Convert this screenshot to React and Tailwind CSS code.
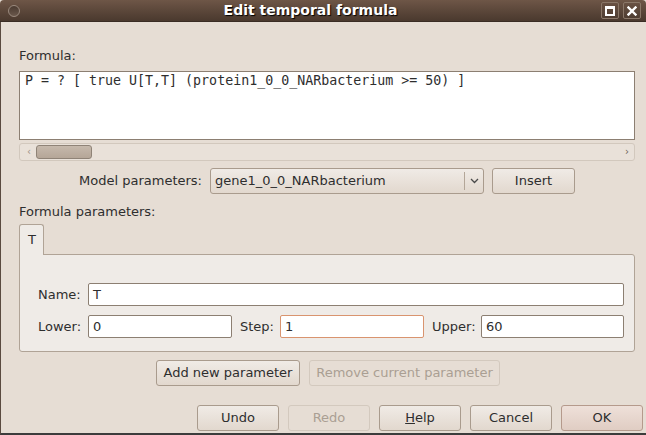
import React from 'react';

const font = { fontFamily: '"DejaVu Sans", Verdana, sans-serif' };

function Button({ children, disabled, primary, className = '' }) {
  return (
    <div
      className={`flex items-center justify-center h-[26px] rounded-[3px] border text-[13px] ${
        disabled
          ? 'border-[#d3c9be] text-[#aa9f93] bg-[#e6ddd4]'
          : primary
          ? 'border-[#b59a8c] text-[#2e2e2e] bg-gradient-to-b from-[#eee0d9] to-[#e0cdc3]'
          : 'border-[#a99b8d] text-[#2e2e2e] bg-gradient-to-b from-[#f0ebe6] to-[#e2d8ce]'
      } ${className}`}
    >
      {children}
    </div>
  );
}

function Field({ value, focused, className = '' }) {
  return (
    <div
      className={`h-[23px] bg-white rounded-[2px] border flex items-center px-[4px] text-[13px] text-[#2e2e2e] ${
        focused ? 'border-[#d9946f]' : 'border-[#8c7f72]'
      } ${className}`}
    >
      {value}
    </div>
  );
}

export default function App() {
  return (
    <div className="w-[646px] h-[435px] bg-[#e6ddd4] flex flex-col text-[#2e2e2e] overflow-hidden" style={font}>
      {/* title bar */}
      <div className="h-[22px] shrink-0 flex items-center pl-[8px] pr-[5px] bg-gradient-to-b from-[#6e5647] to-[#4a392e] border-b border-[#3a2c24] rounded-t-[4px]">
        <div className="w-[12px] h-[12px] rounded-full border border-[#9a8a7e] bg-gradient-to-b from-[#4a3a30] to-[#6a584c]" />
        <div className="flex-1 text-center text-white font-bold text-[14px] [text-shadow:1px_1px_1px_#000]">
          Edit temporal formula
        </div>
        <div className="flex gap-[4px]">
          <div className="w-[18px] h-[17px] border border-[#8a7768] rounded-[2px] flex items-center justify-center">
            <div className="w-[10px] h-[10px] border-[2px] border-white border-t-[3px]" />
          </div>
          <div className="w-[18px] h-[17px] border border-[#8a7768] rounded-[2px] flex items-center justify-center">
            <svg width="10" height="10" viewBox="0 0 10 10">
              <path d="M1.5 1.5L8.5 8.5M8.5 1.5L1.5 8.5" stroke="#fff" strokeWidth="2.4" strokeLinecap="square" />
            </svg>
          </div>
        </div>
      </div>

      <div className="flex-1 flex flex-col pl-[18px] pr-[11px] border-l border-[#5a4a40] border-b-[2px] border-b-[#3c3c3c]">
        <div className="mt-[26px] text-[13px] leading-[16px]">Formula:</div>

        <div className="mt-[7px] h-[69px] bg-white border border-[#8c7f72] px-[5px] pt-[1px] text-[13.3px] leading-[16px]" style={{ fontFamily: '"DejaVu Sans Mono", monospace' }}>
          P = ? [ true U[T,T] (protein1_0_0_NARbacterium &gt;= 50) ]
        </div>

        <div className="mt-[3px] h-[18px] rounded-[3px] border border-[#d2c8bd] bg-[#e9e1d9] flex items-center pl-[7px] pr-[5px] justify-between">
          <div className="flex items-center gap-[5px]">
            <span className="text-[10px] text-[#9c9187] leading-none">‹</span>
            <div className="w-[56px] h-[14px] rounded-[3px] border border-[#8f8377] bg-gradient-to-b from-[#c6b9ac] to-[#b5a698]" />
          </div>
          <span className="text-[10px] text-[#6c6157] leading-none">›</span>
        </div>

        <div className="mt-[7px] flex items-center h-[26px]">
          <div className="w-[183px] text-right text-[13px]">Model parameters:</div>
          <div className="ml-[8px] w-[274px] h-[26px] rounded-[3px] border border-[#a99b8d] bg-gradient-to-b from-[#f0ebe6] to-[#e2d8ce] flex items-center text-[13px]">
            <div className="flex-1 pl-[4px]">gene1_0_0_NARbacterium</div>
            <div className="w-px h-[18px] bg-[#b3a698]" />
            <div className="w-[18px] flex justify-center">
              <svg width="9" height="6" viewBox="0 0 9 6">
                <path d="M1 1L4.5 4.5L8 1" stroke="#4a4a4a" strokeWidth="1.3" fill="none" />
              </svg>
            </div>
          </div>
          <Button className="ml-[8px] w-[83px]">Insert</Button>
        </div>

        <div className="mt-[10px] text-[13px] leading-[16px]">Formula parameters:</div>

        <div className="mt-[3px] flex">
          <div className="w-[25px] h-[31px] border border-[#b0a396] border-b-0 rounded-t-[3px] bg-[#efebe7] pl-[8px] pt-[5px] text-[13px] relative top-px z-10">T</div>
        </div>
        <div className="h-[98px] border border-[#b0a396] rounded-b-[3px] rounded-tr-[3px] bg-[#efebe7] flex flex-col px-[18px] pt-[28px] gap-[9px] text-[13px]">
          <div className="flex items-center">
            <div className="w-[50px]">Name:</div>
            <Field value="T" className="flex-1 mr-[-8px]" />
          </div>
          <div className="flex items-center">
            <div className="w-[50px]">Lower:</div>
            <Field value="0" className="w-[144px]" />
            <div className="ml-[8px] w-[40px]">Step:</div>
            <Field value="1" focused className="w-[144px]" />
            <div className="ml-[8px] w-[49px]">Upper:</div>
            <Field value="60" className="flex-1 mr-[-8px]" />
          </div>
        </div>

        <div className="mt-[8px] flex">
          <Button className="ml-[137px] w-[144px]">Add new parameter</Button>
          <Button disabled className="ml-[9px] w-[191px]">Remove current parameter</Button>
        </div>

        <div className="mt-[19px] flex justify-end gap-[9px] mr-[-8px]">
          <Button className="w-[82px]">Undo</Button>
          <Button disabled className="w-[82px]">Redo</Button>
          <Button className="w-[82px]"><span><span className="underline">H</span>elp</span></Button>
          <Button className="w-[82px]">Cancel</Button>
          <Button primary className="w-[82px]">OK</Button>
        </div>
      </div>
    </div>
  );
}
